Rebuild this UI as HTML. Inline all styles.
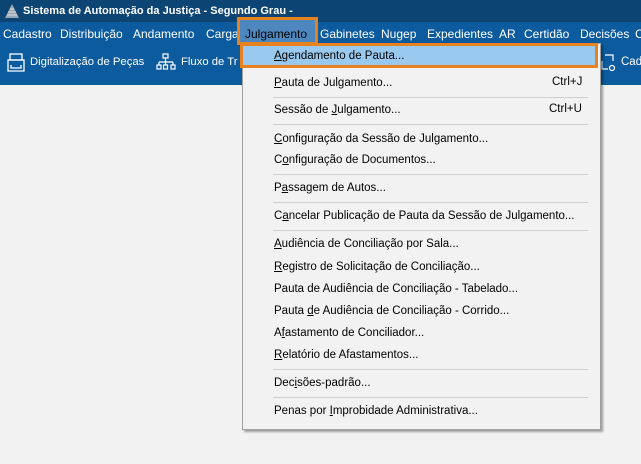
<!DOCTYPE html>
<html><head><meta charset="utf-8"><style>
body{margin:0;width:641px;height:464px;overflow:hidden;background:#f2f2f2;font-family:"Liberation Sans","DejaVu Sans",sans-serif;font-size:11.5px;position:relative}
.a{position:absolute;white-space:nowrap}
#title{left:0;top:0;width:641px;height:22px;background:#0c4473}
#menu{left:0;top:22px;width:641px;height:23px;background:#0c5b9e}
#tool{left:0;top:45px;width:641px;height:40px;background:#0c5b9e}
.w{color:#fff}
.mb{color:#fff;top:27px;font-size:12px}
.m{color:#000;left:274px;line-height:14px}
.sep{position:absolute;left:273px;width:315px;height:1px;background:#cfcfcf}
u{text-decoration:underline}
</style></head><body>
<div class="a" id="title"></div>
<div class="a" id="menu"></div>
<div class="a" id="tool"></div>
<svg class="a" style="left:4px;top:3px" width="16" height="16"><polygon points="8,1 15,15 1,15" fill="#9aa7b5"/><path d="M4 9h8M3 12h10M6 6h4" stroke="#ddd" stroke-width="1"/></svg>
<div class="a w" style="left:23px;top:5px;font-weight:bold;font-size:11px">Sistema de Automação da Justiça - Segundo Grau -</div>
<div class="a mb" style="left:3px">Cadastro</div>
<div class="a mb" style="left:60px">Distribuição</div>
<div class="a mb" style="left:133px">Andamento</div>
<div class="a mb" style="left:206px">Carga</div>
<div class="a" style="left:237px;top:17px;width:81px;height:28px;background:#4d87bf;border:3px solid #e8821e;box-sizing:border-box"></div>
<div class="a mb" style="left:245px;color:#000">Julgamento</div>
<div class="a mb" style="left:320px">Gabinetes</div>
<div class="a mb" style="left:381px">Nugep</div>
<div class="a mb" style="left:427px">Expedientes</div>
<div class="a mb" style="left:499px">AR</div>
<div class="a mb" style="left:524px">Certidão</div>
<div class="a mb" style="left:580px">Decisões</div>
<div class="a mb" style="left:635px">C</div>
<svg class="a" style="left:7px;top:53px" width="18" height="20" fill="none" stroke="#fff" stroke-width="1.3"><rect x="3" y="1" width="12" height="6"/><path d="M1 7h16v11H1zM4 12v3h10v-3"/></svg>
<div class="a w" style="left:30px;top:56px;font-size:11.3px">Digitalização de Peças</div>
<svg class="a" style="left:156px;top:53px" width="20" height="18" fill="none" stroke="#fff" stroke-width="1.2"><rect x="7" y="1" width="5" height="4"/><path d="M9.5 5v4M3 9h14M3 9v3M9.5 9v3M17 9v3"/><rect x="1" y="12" width="4" height="4"/><rect x="7.5" y="12" width="4" height="4"/><rect x="15" y="12" width="4" height="4"/></svg>
<div class="a w" style="left:181px;top:56px;font-size:11.3px">Fluxo de Tr</div>
<svg class="a" style="left:600px;top:53px" width="18" height="20" fill="none" stroke="#fff" stroke-width="1.2"><path d="M5 2h8v6M2 8v8h6"/><circle cx="12" cy="15" r="2.5"/></svg>
<div class="a w" style="left:621px;top:56px">Cad</div>
<div class="a" style="left:242px;top:43px;width:357px;height:385px;background:#f2f2f2;border:1px solid #a0a0a0;box-shadow:2px 2px 2px rgba(0,0,0,.35)"></div>
<div class="a" style="left:243px;top:45px;width:353px;height:21px;background:#99c9ee"></div>
<div class="a" style="left:240px;top:43px;width:358px;height:25px;border:3px solid #e8821e;box-sizing:border-box"></div>
<div class="a m" style="top:49px"><u>A</u>gendamento de Pauta...</div>
<div class="a m" style="top:76px"><u>P</u>auta de Julgamento...</div><div class="a" style="left:552px;top:76px">Ctrl+J</div>
<div class="sep" style="top:97px"></div>
<div class="a m" style="top:103px">Sessão de <u>J</u>ulgamento...</div><div class="a" style="left:549px;top:103px">Ctrl+U</div>
<div class="sep" style="top:124px"></div>
<div class="a m" style="top:132px"><u>C</u>onfiguração da Sessão de Julgamento...</div>
<div class="a m" style="top:153px">C<u>o</u>nfiguração de Documentos...</div>
<div class="sep" style="top:174px"></div>
<div class="a m" style="top:181px">P<u>a</u>ssagem de Autos...</div>
<div class="sep" style="top:202px"></div>
<div class="a m" style="top:209px">C<u>a</u>ncelar Publicação de Pauta da Sessão de Julgamento...</div>
<div class="sep" style="top:230px"></div>
<div class="a m" style="top:237px"><u>A</u>udiência de Conciliação por Sala...</div>
<div class="a m" style="top:260px"><u>R</u>egistro de Solicitação de Conciliação...</div>
<div class="a m" style="top:282px">Pauta de Audiência de Conciliação - Tabelado...</div>
<div class="a m" style="top:304px">Pauta <u>d</u>e Audiência de Conciliação - Corrido...</div>
<div class="a m" style="top:326px">A<u>f</u>astamento de Conciliador...</div>
<div class="a m" style="top:348px"><u>R</u>elatório de Afastamentos...</div>
<div class="sep" style="top:369px"></div>
<div class="a m" style="top:376px">Dec<u>i</u>sões-padrão...</div>
<div class="sep" style="top:397px"></div>
<div class="a m" style="top:404px">Penas por <u>I</u>mprobidade Administrativa...</div>
</body></html>
